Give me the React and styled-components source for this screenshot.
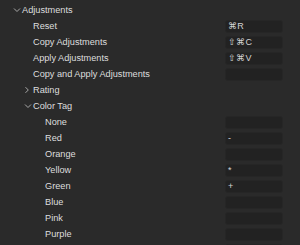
import React from 'react';
import styled, { createGlobalStyle } from 'styled-components';

const Global = createGlobalStyle`
  html, body { margin: 0; padding: 0; background: #2a2a2a; }
  body { font-family: "Liberation Sans", Arial, sans-serif; }
`;

const List = styled.div`
  width: 300px;
  height: 245px;
  overflow: hidden;
  padding-top: 2px;
  box-sizing: border-box;
  background: #2a2a2a;
`;

const Row = styled.div`
  height: 16px;
  display: flex;
  align-items: center;
  padding-left: ${p => p.indent}px;
  padding-right: 17px;
`;

const Toggle = styled.span`
  width: 8px;
  display: flex;
  align-items: center;
  margin-right: 1px;
  color: #a8a8a8;
`;

const Label = styled.span`
  flex: 1;
  font-size: 9.2px;
  color: #dedede;
  white-space: nowrap;
`;

const Key = styled.div`
  width: 58px;
  height: 13px;
  box-sizing: border-box;
  border-radius: 3px;
  background: #222222;
  border: 1px solid #262626;
  display: flex;
  align-items: center;
  padding-left: 2px;
  font-size: 9px;
  color: #d4d4d4;
  letter-spacing: 0.3px;
`;

const Chevron = ({ open }) => (
  <svg width="8" height="8" viewBox="0 0 8 8">
    {open
      ? <path d="M1 2.5 L4 5.5 L7 2.5" fill="none" stroke="currentColor" strokeWidth="1" />
      : <path d="M1.5 1.2 L4.3 4 L1.5 6.8" fill="none" stroke="currentColor" strokeWidth="1" />}
  </svg>
);

const rows = [
  { label: 'Adjustments', indent: 13, group: true, open: true },
  { label: 'Reset', indent: 33, key: '⌘R' },
  { label: 'Copy Adjustments', indent: 33, key: '⇧⌘C' },
  { label: 'Apply Adjustments', indent: 33, key: '⇧⌘V' },
  { label: 'Copy and Apply Adjustments', indent: 33, key: '' },
  { label: 'Rating', indent: 24, group: true, open: false },
  { label: 'Color Tag', indent: 24, group: true, open: true },
  { label: 'None', indent: 45, key: '' },
  { label: 'Red', indent: 45, key: '-' },
  { label: 'Orange', indent: 45, key: '' },
  { label: 'Yellow', indent: 45, key: '*' },
  { label: 'Green', indent: 45, key: '+' },
  { label: 'Blue', indent: 45, key: '' },
  { label: 'Pink', indent: 45, key: '' },
  { label: 'Purple', indent: 45, key: '' },
  { label: '', indent: 45, key: '' },
];

export default function App() {
  return (
    <>
      <Global />
      <List>
        {rows.map((r, i) => (
          <Row key={i} indent={r.indent}>
            {r.group && <Toggle><Chevron open={r.open} /></Toggle>}
            <Label>{r.label}</Label>
            {!r.group && <Key>{r.key}</Key>}
          </Row>
        ))}
      </List>
    </>
  );
}
